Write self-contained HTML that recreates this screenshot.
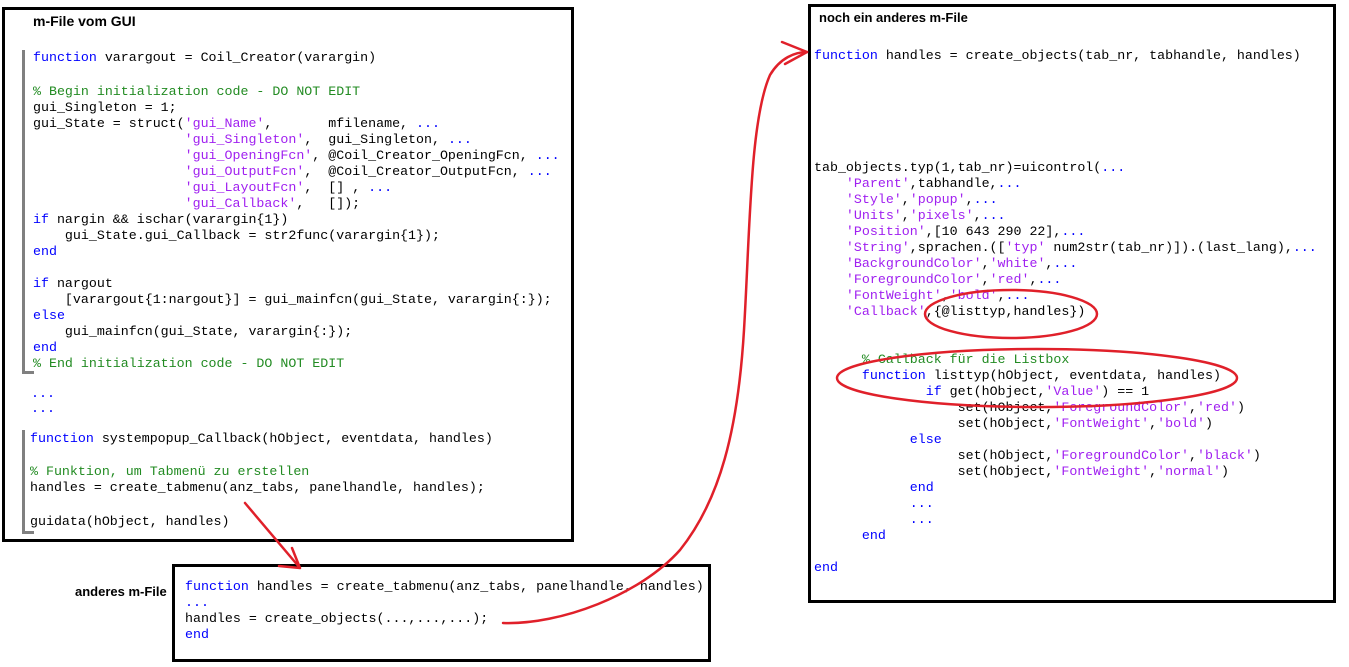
<!DOCTYPE html>
<html><head><meta charset="utf-8"><style>
body{margin:0;width:1349px;height:667px;background:#fff;position:relative;overflow:hidden}
.box{position:absolute;border:3px solid #000;box-sizing:border-box;background:#fff}
.t{position:absolute;font:bold 14px "Liberation Sans",sans-serif;color:#000}
.c{position:absolute;font:13.3px/16px "Liberation Mono",monospace;white-space:pre;color:#000}
.k{color:#0000ff}.s{color:#a020f0}.g{color:#228b22}
.bar{position:absolute;background:#808080;width:3px}
.tick{position:absolute;background:#808080;height:3px;width:12px}
</style></head><body>
<div class="box" style="left:2px;top:7px;width:572px;height:535px"></div>
<div class="box" style="left:172px;top:564px;width:539px;height:98px"></div>
<div class="box" style="left:808px;top:4px;width:528px;height:599px"></div>
<div class="t" style="left:33px;top:13px">m-File vom GUI</div>
<div class="t" style="left:819px;top:10px;font-size:13px">noch ein anderes m-File</div>
<div class="t" style="left:75px;top:584px;font-size:13px">anderes m-File</div>
<div class="bar" style="left:22px;top:50px;height:324px"></div><div class="tick" style="left:22px;top:371px"></div>
<div class="bar" style="left:22px;top:430px;height:104px"></div><div class="tick" style="left:22px;top:531px"></div>

<div class="c" style="left:33px;top:50px"><span class="k">function</span> varargout = Coil_Creator(varargin)</div>
<div class="c" style="left:33px;top:84px"><span class="g">% Begin initialization code - DO NOT EDIT</span>
gui_Singleton = 1;
gui_State = struct(<span class="s">'gui_Name'</span>,       mfilename, <span class="k">...</span>
                   <span class="s">'gui_Singleton'</span>,  gui_Singleton, <span class="k">...</span>
                   <span class="s">'gui_OpeningFcn'</span>, @Coil_Creator_OpeningFcn, <span class="k">...</span>
                   <span class="s">'gui_OutputFcn'</span>,  @Coil_Creator_OutputFcn, <span class="k">...</span>
                   <span class="s">'gui_LayoutFcn'</span>,  [] , <span class="k">...</span>
                   <span class="s">'gui_Callback'</span>,   []);
<span class="k">if</span> nargin &amp;&amp; ischar(varargin{1})
    gui_State.gui_Callback = str2func(varargin{1});
<span class="k">end</span>

<span class="k">if</span> nargout
    [varargout{1:nargout}] = gui_mainfcn(gui_State, varargin{:});
<span class="k">else</span>
    gui_mainfcn(gui_State, varargin{:});
<span class="k">end</span>
<span class="g">% End initialization code - DO NOT EDIT</span></div>
<div class="c" style="left:31px;top:386px"><span class="k">...</span></div>
<div class="c" style="left:31px;top:401px"><span class="k">...</span></div>
<div class="c" style="left:30px;top:431px"><span class="k">function</span> systempopup_Callback(hObject, eventdata, handles)</div>
<div class="c" style="left:30px;top:464px"><span class="g">% Funktion, um Tabmenü zu erstellen</span>
handles = create_tabmenu(anz_tabs, panelhandle, handles);</div>
<div class="c" style="left:30px;top:514px">guidata(hObject, handles)</div>

<div class="c" style="left:185px;top:579px"><span class="k">function</span> handles = create_tabmenu(anz_tabs, panelhandle, handles)
<span class="k">...</span>
handles = create_objects(...,...,...);
<span class="k">end</span></div>

<div class="c" style="left:814px;top:48px"><span class="k">function</span> handles = create_objects(tab_nr, tabhandle, handles)</div>
<div class="c" style="left:814px;top:160px">tab_objects.typ(1,tab_nr)=uicontrol(<span class="k">...</span>
    <span class="s">'Parent'</span>,tabhandle,<span class="k">...</span>
    <span class="s">'Style'</span>,<span class="s">'popup'</span>,<span class="k">...</span>
    <span class="s">'Units'</span>,<span class="s">'pixels'</span>,<span class="k">...</span>
    <span class="s">'Position'</span>,[10 643 290 22],<span class="k">...</span>
    <span class="s">'String'</span>,sprachen.([<span class="s">'typ'</span> num2str(tab_nr)]).(last_lang),<span class="k">...</span>
    <span class="s">'BackgroundColor'</span>,<span class="s">'white'</span>,<span class="k">...</span>
    <span class="s">'ForegroundColor'</span>,<span class="s">'red'</span>,<span class="k">...</span>
    <span class="s">'FontWeight'</span>,<span class="s">'bold'</span>,<span class="k">...</span>
    <span class="s">'Callback'</span>,{@listtyp,handles})


      <span class="g">% Callback für die Listbox</span>
      <span class="k">function</span> listtyp(hObject, eventdata, handles)
              <span class="k">if</span> get(hObject,<span class="s">'Value'</span>) == 1
                  set(hObject,<span class="s">'ForegroundColor'</span>,<span class="s">'red'</span>)
                  set(hObject,<span class="s">'FontWeight'</span>,<span class="s">'bold'</span>)
            <span class="k">else</span>
                  set(hObject,<span class="s">'ForegroundColor'</span>,<span class="s">'black'</span>)
                  set(hObject,<span class="s">'FontWeight'</span>,<span class="s">'normal'</span>)
            <span class="k">end</span>
            <span class="k">...</span>
            <span class="k">...</span>
      <span class="k">end</span>

<span class="k">end</span></div>

<svg width="1349" height="667" style="position:absolute;left:0;top:0" fill="none" stroke="#e0202a" stroke-width="2.5" stroke-linecap="round">
<path d="M245 503 L300 568 M300 568 L279 566 M300 568 L292 548"/>
<path d="M503 623 C560 625 640 595 680 550 C720 500 738 430 744 330 C750 230 750 120 770 75 C780 58 795 52 807 52"/>
<path d="M807 52 L782 42 M807 52 L785 64"/>
<ellipse cx="1011" cy="314" rx="86" ry="24"/>
<ellipse cx="1037" cy="378" rx="200" ry="29"/>
</svg>
</body></html>
